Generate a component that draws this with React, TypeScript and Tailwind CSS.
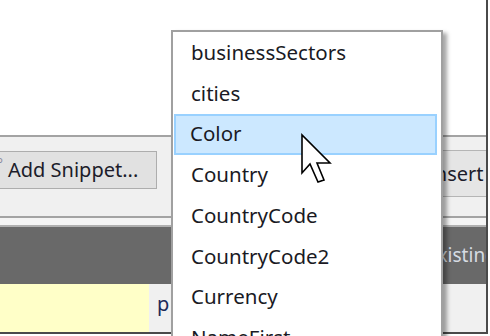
import React from 'react';

const items = [
  'businessSectors',
  'cities',
  'Color',
  'Country',
  'CountryCode',
  'CountryCode2',
  'Currency',
  'NameFirst',
];

function Cursor() {
  return (
    <svg
      className="absolute left-[300px] top-[133px]"
      width="34"
      height="52"
      viewBox="0 0 34 52"
    >
      <path
        d="M2 2 L2 40 L10 31 L18 49 L24 47 L17 30 L30 30 Z"
        fill="#fff"
        stroke="#000"
        strokeWidth="1.6"
        strokeLinejoin="miter"
      />
    </svg>
  );
}

export default function App() {
  return (
    <div
      className="relative w-[490px] h-[336px] overflow-hidden bg-white"
      style={{ fontFamily: '"Noto Sans", "Open Sans", sans-serif' }}
    >
      {/* framed screenshot area */}
      <div className="flex flex-col w-[488px] h-[334px] border-r-2 border-b-2 border-[#4a4a4a] overflow-hidden">
        <div className="h-[135px] bg-white shrink-0" />
        <div className="h-[2px] bg-[#a3a3a3] shrink-0" />

        {/* toolbar */}
        <div className="relative h-[79px] bg-[#f0f0f0] shrink-0 flex">
          <div className="mt-[14px] h-[38px] w-[157px] bg-[#e1e1e1] border border-l-0 border-[#adadad] flex items-center text-[20px] text-[#1c1c2a] leading-none">
            <span className="text-[#8a8aa0] text-[14px] -mt-3 -ml-[3px] mr-[5px]">°</span>
            <span className="whitespace-nowrap">Add Snippet...</span>
          </div>
          <div className="ml-auto mt-[13px] h-[47px] w-[60px] bg-[#e5e5e5] border-y border-[#b5b5b5] flex items-center pl-[2px] text-[20px] text-[#1c1c2a] leading-none whitespace-nowrap">
            Insert
          </div>
        </div>

        <div className="h-[2px] bg-[#a3a3a3] shrink-0" />
        <div className="h-[7px] bg-[#f4f4f4] shrink-0" />
        <div className="h-[2px] bg-[#b0b0b0] shrink-0" />

        {/* dark band */}
        <div className="h-[57px] bg-[#696969] shrink-0 flex items-center pl-[427px] text-[19px] text-[#d6dbe2] whitespace-nowrap leading-none">
          Existing
        </div>

        {/* bottom row */}
        <div className="flex flex-1">
          <div className="w-[149px] bg-[#ffffc8]" />
          <div className="flex-1 bg-[#f0f0f0] pl-[8px] pt-[10px] text-[20px] text-[#1c2a5a] leading-none">
            p
          </div>
        </div>
      </div>

      {/* dropdown list */}
      <div className="absolute left-[171px] top-[30px] w-[272px] h-[330px] bg-white border-2 border-[#a0a0a0] shadow-[4px_3px_4px_rgba(0,0,0,0.35)] pt-[1px] px-[1px]">
        {items.map((name) => (
          <div
            key={name}
            className={`h-[40.7px] flex items-center text-[20.5px] text-[#1a1a24] whitespace-nowrap leading-none ${
              name === 'Color' ? 'bg-[#cce8ff] border-2 border-[#99d1ff] pl-[14px] mr-[3px]' : 'pl-[17px]'
            }`}
          >
            <span className="-mt-[2px]">{name}</span>
          </div>
        ))}
      </div>

      <Cursor />
    </div>
  );
}
